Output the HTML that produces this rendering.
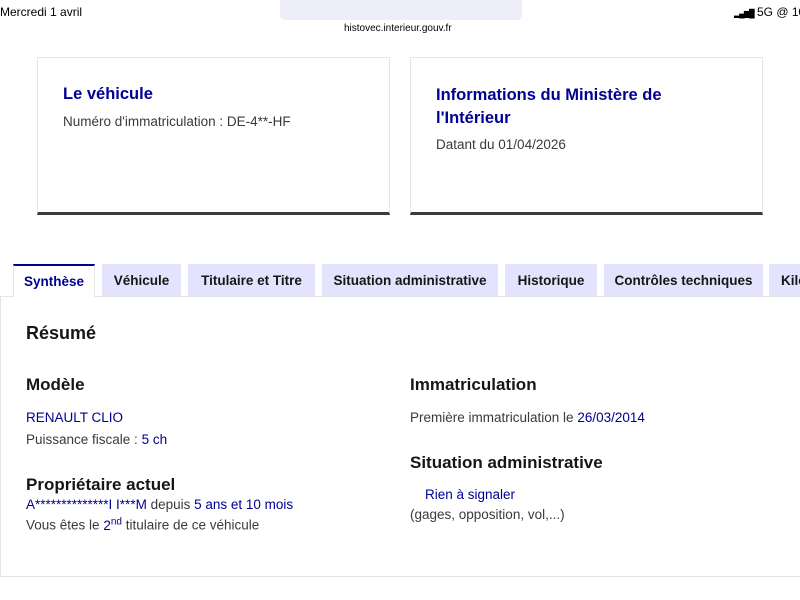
<!DOCTYPE html>
<html><head><meta charset="utf-8"><style>
*{margin:0;padding:0;box-sizing:border-box}
body{width:800px;height:600px;overflow:hidden;background:#fff;font-family:"Liberation Sans","DejaVu Sans",sans-serif;position:relative;color:#3a3a3a}
.a{position:absolute;white-space:nowrap}
.card{position:absolute;border:1px solid #e5e5e5;border-bottom:3px solid #3a3a3a;background:#fff}
.blue{color:#000091}
.tab{position:absolute;top:264px;height:32px;background:#e3e3fd;font-weight:bold;font-size:13.5px;color:#161616;display:flex;align-items:center;justify-content:center}
h3{font-size:17px;color:#161616}
.t{font-size:13.5px}
</style></head><body>
<div class="a" style="left:0;top:5px;font-size:12px;color:#000">Mercredi 1 avril</div>
<div class="a" style="left:280px;top:0;width:242px;height:20px;background:#eeeefb;border-radius:0 0 4px 4px"></div>
<div class="a" style="left:344px;top:23px;font-size:10px;color:#000">histovec.interieur.gouv.fr</div>
<div class="a" style="left:734px;top:5px;font-size:12px;color:#000;width:80px"><span style="font-size:8px;letter-spacing:-1px">▂▄▆█</span> 5G @ 100</div>

<div class="card" style="left:37px;top:57px;width:353px;height:158px"></div>
<div class="a blue" style="left:63px;top:85px;font-size:16.5px;font-weight:bold">Le véhicule</div>
<div class="a t" style="left:63px;top:114px">Numéro d'immatriculation : DE-4**-HF</div>

<div class="card" style="left:410px;top:57px;width:353px;height:158px"></div>
<div class="a blue" style="left:436px;top:84px;font-size:16.5px;font-weight:bold;line-height:23px">Informations du Ministère de<br>l'Intérieur</div>
<div class="a t" style="left:436px;top:137px">Datant du 01/04/2026</div>

<div class="a" style="left:0;top:296px;width:800px;height:281px;border:1px solid #e5e5e5;border-right:none"></div>
<div class="tab" style="left:13px;width:82px;background:#fff;border-top:2px solid #000091;color:#000091;height:33px;border-left:1px solid #e5e5e5;border-right:1px solid #e5e5e5">Synthèse</div>
<div class="tab" style="left:102px;width:79px">Véhicule</div>
<div class="tab" style="left:188px;width:127px">Titulaire et Titre</div>
<div class="tab" style="left:322px;width:176px">Situation administrative</div>
<div class="tab" style="left:505px;width:92px">Historique</div>
<div class="tab" style="left:604px;width:159px">Contrôles techniques</div>
<div class="tab" style="left:769px;width:40px;justify-content:flex-start;padding-left:12px">Kilo</div>

<div class="a" style="left:26px;top:323px;font-size:18px;font-weight:bold;color:#161616">Résumé</div>
<div class="a" style="left:26px;top:375px"><h3>Modèle</h3></div>
<div class="a t blue" style="left:26px;top:410px">RENAULT CLIO</div>
<div class="a t" style="left:26px;top:432px">Puissance fiscale : <span class="blue">5 ch</span></div>
<div class="a" style="left:26px;top:475px"><h3>Propriétaire actuel</h3></div>
<div class="a t" style="left:26px;top:497px"><span class="blue">A**************I I***M</span> depuis <span class="blue">5 ans et 10 mois</span></div>
<div class="a t" style="left:26px;top:516px">Vous êtes le <span class="blue">2<sup style="font-size:10px">nd</sup></span> titulaire de ce véhicule</div>

<div class="a" style="left:410px;top:375px"><h3>Immatriculation</h3></div>
<div class="a t" style="left:410px;top:410px">Première immatriculation le <span class="blue">26/03/2014</span></div>
<div class="a" style="left:410px;top:453px"><h3>Situation administrative</h3></div>
<div class="a t blue" style="left:425px;top:487px">Rien à signaler</div>
<div class="a t" style="left:410px;top:507px">(gages, opposition, vol,...)</div>
</body></html>
